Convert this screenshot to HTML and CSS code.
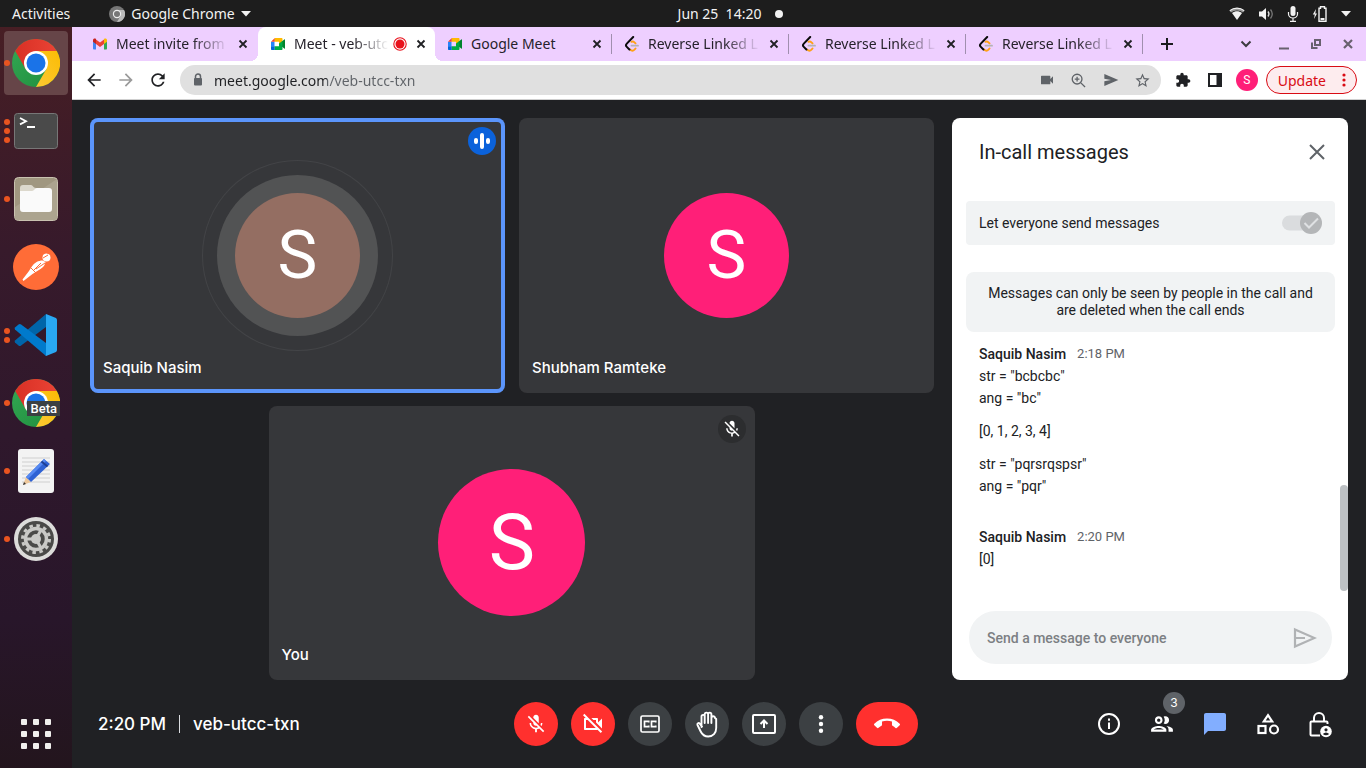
FILE: index.html
```html
<!DOCTYPE html>
<html lang="en">
<head>
<meta charset="utf-8">
<meta name="viewport" content="width=device-width, initial-scale=1">
<title>Meet - veb-utcc-txn</title>
<link rel="stylesheet" href="styles.css">
</head>
<body>
<svg class="defs" aria-hidden="true">
  <defs>
    <linearGradient id="g-red" x1="0" y1="0" x2="1" y2="0"><stop offset="0" stop-color="#d93025"/><stop offset="1" stop-color="#ea4335"/></linearGradient>
    <linearGradient id="g-green" x1="0" y1="0" x2="1" y2="1"><stop offset="0" stop-color="#34a853"/><stop offset="1" stop-color="#1e8e3e"/></linearGradient>
    <linearGradient id="g-yellow" x1="0" y1="1" x2="1" y2="0"><stop offset="0" stop-color="#fcc934"/><stop offset="1" stop-color="#fbbc04"/></linearGradient>
    <symbol id="chrome" viewBox="0 0 48 48">
      <circle cx="24" cy="24" r="24" fill="url(#g-green)"/>
      <path d="M24 12H44.8A24 24 0 0 1 24 48L34.4 30Z" fill="url(#g-yellow)"/>
      <path d="M3.2 12A24 24 0 0 1 44.8 12H24L13.6 30Z" fill="url(#g-red)"/>
      <circle cx="24" cy="24" r="12" fill="#fff"/>
      <circle cx="24" cy="24" r="9.5" fill="#1a73e8"/>
    </symbol>
    <symbol id="meet" viewBox="0 0 16 16">
      <path d="M1 5.8h3.5v4.6H1z" fill="#2684fc"/>
      <path d="M4.8 2v3.8H1z" fill="#ea4335"/>
      <path d="M4.8 2h6.7c.6 0 1 .4 1 1v3L9 8.400V5.800H4.800z" fill="#ffba00"/>
      <path d="M1 10.200h3.800V14H2c-.6 0-1-.4-1-1z" fill="#0066da"/>
      <path d="M4.800 10.200H9V8l3.500-2.500v7.500c0 .6-.4 1-1 1H4.800z" fill="#00ac47"/>
      <path d="M9 8l5.200-4.600c.4-.3.800-.1.800.4v8.400c0 .5-.4.700-.8.400z" fill="#00832d"/>
      <path d="M12.500 5v6L9 8z" fill="#00ac47"/>
    </symbol>
    <symbol id="leet" viewBox="0 0 16 16">
      <path d="M6 13.500q2.500 2.200 4.500.2l1-1.200M7.500 5.800q1.500-.8 3 .6l1 1" fill="none" stroke="#ffa116" stroke-width="1.900" stroke-linecap="round"/>
      <path d="M9.200 1L2.800 7.600c-1 1-1 2.300 0 3.300l2.600 2.600" fill="none" stroke="#0b0b0b" stroke-width="2" stroke-linecap="round"/>
      <path d="M7.500 9.700h6.500" stroke="#b3b3b3" stroke-width="1.800" stroke-linecap="round"/>
    </symbol>
    <symbol id="x" viewBox="0 0 12 12"><path d="M2.500 2.500l7 7m0-7l-7 7" stroke="currentColor" stroke-width="1.800" fill="none"/></symbol>
    <symbol id="mic-off" viewBox="0 0 24 24"><path fill="currentColor" d="M19 11h-1.700c0 .74-.16 1.430-.43 2.050l1.230 1.230c.56-.98.9-2.090.9-3.280zm-4.020.17c0-.06.02-.11.02-.17V5c0-1.660-1.340-3-3-3S9 3.340 9 5v.18l5.980 5.990zM4.270 3L3 4.270l6.010 6.010V11c0 1.660 1.330 3 2.990 3 .22 0 .44-.03.65-.08l1.660 1.660c-.71.33-1.500.52-2.310.52-2.760 0-5.300-2.100-5.300-5.100H5c0 3.410 2.720 6.230 6 6.720V21h2v-3.280c.91-.13 1.770-.45 2.540-.9L19.730 21 21 19.730 4.270 3z"/></symbol>
  </defs>
</svg>

<div class="desktop">
  <header class="topbar">
    <div class="topbar-left">
      <button class="plain">Activities</button>
      <button class="plain app-menu">
        <svg width="16" height="16" viewBox="0 0 16 16"><circle cx="8" cy="8" r="8" fill="#777"/><path d="M8 4h7A8 8 0 0 1 8 16l3.500-6z" fill="#bbb"/><circle cx="8" cy="8" r="4.200" fill="#eee"/><circle cx="8" cy="8" r="3" fill="#777"/></svg>
        Google Chrome
        <svg width="10" height="6" viewBox="0 0 10 6"><path d="M0 0h10L5 5.500z" fill="#f2f2f2"/></svg>
      </button>
    </div>
    <div class="clock"><time>Jun 25&nbsp; 14:20</time><span class="dot"></span></div>
    <div class="status">
      <svg width="16" height="16" viewBox="0 0 16 16"><path d="M.5 4.800C5 1 11 1 15.500 4.800L14 6.500C10.500 3.800 5.500 3.800 2 6.500z" fill="#999"/><path d="M3 7c3.200-2.200 6.800-2.200 10 0L8 14z" fill="#f2f2f2"/><path d="M.8 4.600C5 1.200 11 1.200 15.200 4.600" stroke="#f2f2f2" stroke-width="1.200" fill="none"/></svg>
      <svg width="16" height="16" viewBox="0 0 16 16"><path d="M1 5.500h3L8 2v12l-4-3.500H1z" fill="#f2f2f2"/><path d="M10 5.500q2 2.500 0 5" fill="none" stroke="#ddd" stroke-width="1.300"/><path d="M12.500 3.500q3.500 4.500 0 9" fill="none" stroke="#777" stroke-width="1.300"/></svg>
      <svg width="12" height="16" viewBox="0 0 12 16"><rect x="3.500" y="0" width="5" height="10" rx="2.500" fill="#f2f2f2"/><path d="M1.500 6v2a4.500 4 0 0 0 9 0V6M6 12v3M3 15.400h6" fill="none" stroke="#f2f2f2" stroke-width="1.200"/></svg>
      <svg width="16" height="16" viewBox="0 0 16 16"><path d="M4 3L.8 8.500h2L2 13l3-5.500H3.300z" fill="#f2f2f2"/><path d="M7 2.200h1.500V.8h4v1.400H14v13H7z" fill="none" stroke="#f2f2f2" stroke-width="1.400"/><path d="M8.500 12h4v2h-4z" fill="#f2f2f2"/></svg>
      <svg width="10" height="6" viewBox="0 0 10 6"><path d="M0 0h10L5 5.500z" fill="#f2f2f2"/></svg>
    </div>
  </header>

  <nav class="dock" aria-label="Dock">
    <button class="app active" aria-label="Google Chrome"><span class="dots"><i></i></span><svg width="48" height="48"><use href="#chrome"/></svg></button>
    <button class="app" aria-label="Terminal"><span class="dots"><i></i><i></i><i></i></span>
      <svg width="48" height="48" viewBox="0 0 48 48"><rect x="2.500" y="6.500" width="43" height="35" rx="3" fill="#4a4a4a" stroke="#777"/><path d="M8 11l6 3.200-6 3.200M15 20h8" fill="none" stroke="#fff" stroke-width="1.800"/></svg></button>
    <button class="app" aria-label="Files"><span class="dots"><i></i></span>
      <svg width="48" height="48" viewBox="0 0 48 48"><rect x="2.500" y="2.500" width="43" height="43" rx="4" fill="#a09780" stroke="#c9c2b0"/><path d="M3 32L45 4v38q0 3-3 3H6q-3 0-3-3z" fill="#aca48f"/><path d="M8 13c0-2 1-3 3-3h8c2 0 2 3 5 3h13v6H8z" fill="#dcd8cc"/><path d="M8 16h12c2 0 3-3 5-3h12c2 0 3 1 3 3v18c0 2-1 3-3 3H11c-2 0-3-1-3-3z" fill="#fafafa"/></svg></button>
    <button class="app" aria-label="Postman">
      <svg width="48" height="48" viewBox="0 0 48 48"><circle cx="24" cy="24" r="23" fill="#ff6c37"/><circle cx="34.500" cy="14.500" r="4" fill="#fff"/><path d="M30.500 17.500c-4 0-8 2-11 6.500L17 28l-6.500 8.500 1 1.500 9-7 8-5c3-2 4.500-4 5-7z" fill="#fff"/><path d="M31 15l5-3M29 20l-8 8M19 25l5 5M33 20l-9 6" stroke="#ff6c37" stroke-width="1"/></svg></button>
    <button class="app" aria-label="Visual Studio Code"><span class="dots"><i></i><i></i></span>
      <svg width="48" height="48" viewBox="0 0 48 48"><path d="M3 29.500q-.8 1 0 2l3.500 3q1.200 1 2.600 0L36 14.500 34 3z" fill="#0065a9"/><path d="M3 18.500q-.8-1 0-2l3.500-3q1.200-1 2.600 0L36 33.500 34 45z" fill="#007acc"/><path d="M34 3l10 4q1 1 1 2v30q0 1-1 2l-10 4q-.5 0 0-2z" fill="#29a8f3"/></svg></button>
    <button class="app" aria-label="Google Chrome Beta"><span class="dots"><i></i></span><svg width="48" height="48"><use href="#chrome"/></svg><span class="beta">Beta</span></button>
    <button class="app" aria-label="Text Editor"><span class="dots"><i></i></span>
      <svg width="48" height="48" viewBox="0 0 48 48"><rect x="6" y="2" width="36" height="44" rx="3" fill="#f3f3f3"/><path d="M10 11h28M10 15h28M10 19h28M10 23h28M10 27h28M10 31h28M10 35h28" stroke="#cfcfcf"/><path d="M11 38l3-8 5 5z" fill="#edc79b"/><path d="M11 38l1-3 2 2z" fill="#333"/><path d="M14 30l18-18 6 5-19 18z" fill="#2f62d4"/><path d="M14 30l18-18 2 2-18 18z" fill="#5689f2"/><path d="M29.500 14.500l6 5" stroke="#1d3f94" stroke-width="2"/></svg></button>
    <button class="app" aria-label="Settings"><span class="dots"><i></i></span>
      <svg width="48" height="48" viewBox="0 0 48 48"><circle cx="24" cy="24" r="22" fill="#dcdcda"/><circle cx="24" cy="24" r="18" fill="#4a4a48"/><circle cx="24" cy="24" r="13.500" fill="none" stroke="#c9c9c6" stroke-width="3" stroke-dasharray="3.500 3.570"/><circle cx="24" cy="24" r="10.500" fill="none" stroke="#c9c9c6" stroke-width="3.500"/><path d="M24 24l-10 0M24 24l5-9M24 24l5 9" stroke="#c9c9c6" stroke-width="3"/><circle cx="24" cy="24" r="5" fill="#c9c9c6"/></svg></button>
    <button class="app launcher" aria-label="Show Applications">
      <svg width="30" height="30" viewBox="0 0 30 30" fill="#f0efed"><rect width="6" height="6" rx="1"/><rect x="12" width="6" height="6" rx="1"/><rect x="24" width="6" height="6" rx="1"/><rect y="12" width="6" height="6" rx="1"/><rect x="12" y="12" width="6" height="6" rx="1"/><rect x="24" y="12" width="6" height="6" rx="1"/><rect y="24" width="6" height="6" rx="1"/><rect x="12" y="24" width="6" height="6" rx="1"/><rect x="24" y="24" width="6" height="6" rx="1"/></svg></button>
  </nav>

  <div class="browser">
    <div class="tabstrip">
      <div class="tab before-active"><svg class="fav" viewBox="0 0 16 16"><path d="M1 4v8.500c0 .5.500 1 1 1h2V6.500z" fill="#4285f4"/><path d="M15 4v8.500c0 .5-.5 1-1 1h-2V6.500z" fill="#34a853"/><path d="M4 3.500l4 3 4-3V8l-4 3-4-3z" fill="#ea4335"/><path d="M1 4.200C1 2.600 2.800 2 4 3l0 5-3-2.200z" fill="#c5221f"/><path d="M15 4.200C15 2.600 13.200 2 12 3v5l3-2.200z" fill="#fbbc04"/></svg><a class="tab-title" href="#">Meet invite from</a><button class="tab-x" aria-label="Close tab"><svg><use href="#x"/></svg></button></div>
      <div class="tab active"><svg class="fav"><use href="#meet"/></svg><a class="tab-title" href="#">Meet - veb-utc</a><svg class="rec" width="14" height="14" viewBox="0 0 14 14"><circle cx="7" cy="7" r="6.200" fill="none" stroke="#e8111b" stroke-width="1.100"/><circle cx="7" cy="7" r="4.500" fill="#e8111b"/></svg><button class="tab-x" aria-label="Close tab"><svg><use href="#x"/></svg></button></div>
      <div class="tab after-active"><svg class="fav"><use href="#meet"/></svg><a class="tab-title short" href="#">Google Meet</a><button class="tab-x" aria-label="Close tab"><svg><use href="#x"/></svg></button></div>
      <div class="tab"><svg class="fav"><use href="#leet"/></svg><a class="tab-title" href="#">Reverse Linked L</a><button class="tab-x" aria-label="Close tab"><svg><use href="#x"/></svg></button></div>
      <div class="tab"><svg class="fav"><use href="#leet"/></svg><a class="tab-title" href="#">Reverse Linked L</a><button class="tab-x" aria-label="Close tab"><svg><use href="#x"/></svg></button></div>
      <div class="tab"><svg class="fav"><use href="#leet"/></svg><a class="tab-title" href="#">Reverse Linked L</a><button class="tab-x" aria-label="Close tab"><svg><use href="#x"/></svg></button></div>
      <button class="new-tab" aria-label="New tab"><svg width="14" height="14" viewBox="0 0 14 14"><path d="M7 1v12M1 7h12" stroke="#1b1b1f" stroke-width="2"/></svg></button>
      <div class="window-controls">
        <button class="wc search" aria-label="Search tabs"><svg width="12" height="12" viewBox="0 0 12 12"><path d="M1.500 3.500L6 8l4.500-4.500" fill="none" stroke="#3c3c40" stroke-width="2"/></svg></button>
        <button class="wc" aria-label="Minimize"><svg width="12" height="12" viewBox="0 0 12 12"><path d="M1 10.500h10" stroke="#68606e" stroke-width="2"/></svg></button>
        <button class="wc" aria-label="Restore"><svg width="12" height="12" viewBox="0 0 12 12"><path d="M5 2h5v5H5zM2 4.500V10h5.500" fill="none" stroke="#68606e" stroke-width="2"/></svg></button>
        <button class="wc" aria-label="Close"><svg width="12" height="12" viewBox="0 0 12 12"><path d="M2 2l8 8m0-8l-8 8" fill="none" stroke="#68606e" stroke-width="2.200"/></svg></button>
      </div>
    </div>

    <div class="toolbar">
      <button class="tool" aria-label="Back"><svg width="20" height="20" viewBox="0 0 24 24"><path fill="#202124" d="M20 11H7.830l5.590-5.590L12 4l-8 8 8 8 1.410-1.410L7.830 13H20v-2z"/></svg></button>
      <button class="tool" aria-label="Forward"><svg width="20" height="20" viewBox="0 0 24 24"><path fill="#9a9a9a" d="M4 11h12.170l-5.590-5.590L12 4l8 8-8 8-1.410-1.410L16.170 13H4v-2z"/></svg></button>
      <button class="tool" aria-label="Reload"><svg width="20" height="20" viewBox="0 0 24 24"><path fill="#202124" d="M17.650 6.350C16.200 4.900 14.210 4 12 4c-4.420 0-7.990 3.580-7.990 8s3.570 8 7.990 8c3.730 0 6.840-2.550 7.730-6h-2.080c-.82 2.330-3.040 4-5.650 4-3.310 0-6-2.690-6-6s2.690-6 6-6c1.660 0 3.140.69 4.220 1.780L13 11h7V4l-2.350 2.350z"/></svg></button>
      <div class="omnibox">
        <svg width="10" height="14" viewBox="0 0 10 14"><path d="M2.500 6V3.500a2.500 2.500 0 0 1 5 0V6" fill="none" stroke="#5f6368" stroke-width="1.500"/><rect x="1" y="5" width="8" height="7.500" rx="1" fill="#5f6368"/></svg>
        <input class="url" type="text" aria-label="Address" value="meet.google.com/veb-utcc-txn">
        <button class="tool" aria-label="Camera in use"><svg width="16" height="16" viewBox="0 0 24 24"><path fill="#5f6368" d="M17 10.500V6.500c0-.55-.45-1-1-1H4c-.55 0-1 .45-1 1v11c0 .55.450 1 1 1h12c.55 0 1-.45 1-1v-4l4 4v-11l-4 4z"/></svg></button>
        <button class="tool" aria-label="Zoom"><svg width="15" height="15" viewBox="0 0 16 16"><path d="M10.500 10.500L15 15M6.500 4v5M4 6.500h5" stroke="#5f6368" stroke-width="1.400"/><circle cx="6.500" cy="6.500" r="5.200" fill="none" stroke="#5f6368" stroke-width="1.400"/></svg></button>
        <button class="tool" aria-label="Share"><svg width="16" height="16" viewBox="0 0 24 24"><path fill="#5f6368" d="M2 21L23 12 2 3v7l10 2-10 2z"/></svg></button>
        <button class="tool" aria-label="Bookmark"><svg width="17" height="17" viewBox="0 0 24 24"><path fill="#5f6368" d="M22 9.240l-7.190-.62L12 2 9.190 8.630 2 9.240l5.460 4.730L5.820 21 12 17.270 18.180 21l-1.630-7.030L22 9.240zM12 15.400l-3.760 2.270 1-4.280-3.320-2.880 4.380-.38L12 6.100l1.710 4.040 4.380.38-3.320 2.880 1 4.280L12 15.400z"/></svg></button>
      </div>
      <button class="tool" aria-label="Extensions"><svg width="16" height="16" viewBox="0 0 24 24"><path fill="#202124" d="M20.500 11H19V7c0-1.100-.9-2-2-2h-4V3.500C13 2.120 11.880 1 10.500 1S8 2.120 8 3.500V5H4c-1.100 0-1.990.9-1.990 2v3.800H3.500c1.490 0 2.700 1.210 2.700 2.700s-1.210 2.700-2.700 2.700H2V20c0 1.100.9 2 2 2h3.800v-1.500c0-1.490 1.210-2.700 2.700-2.700 1.490 0 2.700 1.210 2.700 2.700V22H17c1.100 0 2-.9 2-2v-4h1.500c1.380 0 2.500-1.120 2.500-2.500S21.880 11 20.500 11z"/></svg></button>
      <button class="tool" aria-label="Side panel"><svg width="14" height="14" viewBox="0 0 14 14"><path fill="#202124" fill-rule="evenodd" d="M0 0h14v14H0zM2 2v10h6.500V2z"/></svg></button>
      <button class="tool" aria-label="Profile"><span class="profile">S</span></button>
      <button class="update">Update<svg width="4" height="14" viewBox="0 0 4 14" fill="#d90b14"><circle cx="2" cy="2" r="1.600"/><circle cx="2" cy="7" r="1.600"/><circle cx="2" cy="12" r="1.600"/></svg></button>
    </div>

    <main class="meet">
      <section class="stage">
        <div class="tiles">
          <article class="tile speaking">
            <div class="avatar brown">S</div>
            <h2 class="name">Saquib Nasim</h2>
            <span class="badge audio"><svg width="18" height="18" viewBox="0 0 18 18" stroke="#fff" stroke-width="4" stroke-linecap="round"><path d="M3 8v2M9 3v12M15 8v2"/></svg></span>
          </article>
          <article class="tile">
            <div class="avatar">S</div>
            <h2 class="name">Shubham Ramteke</h2>
          </article>
          <article class="tile self">
            <div class="avatar large">S</div>
            <h2 class="name">You</h2>
            <span class="badge muted"><svg width="20" height="20"><use href="#mic-off"/></svg></span>
          </article>
        </div>

        <aside class="chat">
          <div class="chat-head">
            <h1>In-call messages</h1>
            <button class="plain" aria-label="Close"><svg width="18" height="18" viewBox="0 0 18 18"><path d="M2 2l14 14M16 2L2 16" stroke="#5f6368" stroke-width="2"/></svg></button>
          </div>
          <label class="allow">Let everyone send messages
            <input type="checkbox" class="switch" checked disabled>
            <svg width="40" height="22" viewBox="0 0 40 22"><rect x="0" y="3.500" width="38" height="15" rx="7.500" fill="#dadcde"/><circle cx="29" cy="11" r="11" fill="#b4b6b8"/><path d="M22.500 11l4.500 4.500 9-9" fill="none" stroke="#dfe1e3" stroke-width="2"/></svg>
          </label>
          <p class="notice">Messages can only be seen by people in the call and are deleted when the call ends</p>
          <div class="messages">
            <div class="msg">
              <div class="msg-head"><b>Saquib Nasim</b><time>2:18 PM</time></div>
              <p>str = "bcbcbc"<br>ang = "bc"</p>
              <p>[0, 1, 2, 3, 4]</p>
              <p>str = "pqrsrqspsr"<br>ang = "pqr"</p>
            </div>
            <div class="msg">
              <div class="msg-head"><b>Saquib Nasim</b><time>2:20 PM</time></div>
              <p>[0]</p>
            </div>
          </div>
          <form class="compose">
            <input type="text" placeholder="Send a message to everyone" aria-label="Send a message to everyone">
            <button class="plain" type="button" aria-label="Send"><svg width="24" height="22" viewBox="0 0 24 22"><path d="M2 2.500L21.500 11 2 19.500zM2 11h10" fill="none" stroke="#b0b2b4" stroke-width="2.200"/></svg></button>
          </form>
          <span class="thumb"></span>
        </aside>
      </section>

      <footer class="callbar">
        <div class="info"><span>2:20 PM</span><span class="rule"></span><span>veb-utcc-txn</span></div>
        <div class="controls">
          <button class="ctl red" aria-label="Turn on microphone"><svg width="22" height="22"><use href="#mic-off"/></svg></button>
          <button class="ctl red" aria-label="Turn on camera"><svg width="24" height="24" viewBox="0 0 24 24"><path fill="#fff" d="M9.560 8l-2-2-4.150-4.140L2 3.270 4.730 6H4c-.55 0-1 .45-1 1v10c0 .55.450 1 1 1h12c.21 0 .39-.08.55-.18L19.730 21l1.410-1.410-8.860-8.860L9.560 8zM5 16V8h1.730l8 8H5zm10-8v2.610l6 6V6.500l-4 4V7c0-.55-.45-1-1-1h-5.610l2 2H15z"/></svg></button>
          <button class="ctl" aria-label="Turn on captions"><svg width="20" height="18" viewBox="0 0 20 18" fill="none" stroke="#fff" stroke-width="1.700"><rect x="1" y="1" width="18" height="16" rx="1.500"/><path d="M8.700 7.500V6.400H4.500v5.200h4.200v-1.100M15.700 7.500V6.400h-4.200v5.200h4.200v-1.100"/></svg></button>
          <button class="ctl" aria-label="Raise hand"><svg width="24" height="28" viewBox="0 0 24 28" fill="none" stroke="#fff" stroke-width="1.900" stroke-linecap="round" stroke-linejoin="round"><path d="M6.500 17V6.500a1.600 1.600 0 0 1 3.200 0V13 4.300a1.600 1.600 0 0 1 3.400 0V13 4.300a1.600 1.600 0 0 1 3.300 0V13 8a1.700 1.700 0 0 1 3.600 0l1.200 1V18c0 5-3.200 8.500-8 8.500-4 0-6-2-7.500-5L2.500 15c-.7-1.600 1.200-2.600 2.200-1.400l2.300 3"/></svg></button>
          <button class="ctl" aria-label="Present now"><svg width="24" height="20" viewBox="0 0 24 20" fill="none" stroke="#fff"><rect x="1" y="1" width="22" height="18" rx="1" stroke-width="2"/><path d="M12 14V7M8.500 10L12 6.500l3.500 3.500" stroke-width="2"/></svg></button>
          <button class="ctl" aria-label="More options"><svg width="6" height="18" viewBox="0 0 6 18" fill="#fff"><circle cx="3" cy="2.200" r="2.200"/><circle cx="3" cy="9" r="2.200"/><circle cx="3" cy="15.800" r="2.200"/></svg></button>
          <button class="ctl red leave" aria-label="Leave call"><svg width="26" height="26" viewBox="0 0 24 24"><path fill="#fff" d="M12 9c-1.600 0-3.150.25-4.600.72v3.100c0 .39-.23.74-.56.9-.98.49-1.870 1.120-2.660 1.850-.18.18-.43.28-.7.28-.28 0-.53-.11-.71-.29L.29 13.080c-.18-.17-.29-.42-.29-.7 0-.28.110-.53.290-.71C3.340 8.780 7.460 7 12 7s8.660 1.780 11.710 4.670c.18.18.290.43.290.71 0 .28-.11.53-.29.71l-2.480 2.480c-.18.18-.43.29-.71.29-.27 0-.52-.11-.7-.28-.79-.74-1.690-1.360-2.670-1.850-.33-.16-.56-.5-.56-.9v-3.100C15.150 9.250 13.600 9 12 9z"/></svg></button>
        </div>
        <div class="panels">
          <button class="panel" aria-label="Meeting details"><svg width="24" height="24" viewBox="0 0 24 24"><circle cx="12" cy="12" r="10" fill="none" stroke="#fff" stroke-width="2"/><path d="M12 10.500V17M12 6.500v2.200" stroke="#fff" stroke-width="2"/></svg></button>
          <button class="panel" aria-label="Show everyone"><svg width="24" height="24" viewBox="0 3 22 18"><path fill="#fff" d="M8 13.750c-2.340 0-7 1.170-7 3.500V19h14v-1.750c0-2.330-4.660-3.500-7-3.500zM3.340 17c.84-.58 2.870-1.250 4.660-1.250s3.820.67 4.660 1.250H3.340zM8 12c1.930 0 3.500-1.570 3.500-3.500S9.930 5 8 5 4.500 6.570 4.500 8.500 6.070 12 8 12zm0-5c.83 0 1.500.67 1.500 1.500S8.830 10 8 10s-1.500-.67-1.500-1.500S7.170 7 8 7zm7.040 6.810c1.160.84 1.960 1.960 1.960 3.440V19h4v-1.750c0-2.020-3.500-3.170-5.960-3.440zM14 12c1.930 0 3.500-1.570 3.500-3.500S15.930 5 14 5c-.54 0-1.040.13-1.500.35.63.89 1 1.980 1 3.150s-.37 2.260-1 3.150c.46.22.96.35 1.500.35z"/></svg><span class="count">3</span></button>
          <button class="panel" aria-label="Chat with everyone"><svg width="24" height="24" viewBox="0 0 24 24"><path d="M1 3c0-1.200.8-2 2-2h18c1.200 0 2 .8 2 2v14c0 1.200-.8 2-2 2H5l-4 4z" fill="#82aeff"/></svg></button>
          <button class="panel" aria-label="Activities"><svg width="24" height="24" viewBox="0 0 24 24" fill="none" stroke="#fff" stroke-width="2.200"><path d="M12 3.200L16.200 9.500H7.800z"/><rect x="2.500" y="14" width="7" height="7"/><circle cx="18" cy="17.500" r="4"/></svg></button>
          <button class="panel" aria-label="Host controls"><svg width="24" height="26" viewBox="2 0 24 26"><path d="M13 23.500H4.500a1 1 0 0 1-1-1v-12a1 1 0 0 1 1-1h15a1 1 0 0 1 1 1V12M7 9.500V6a5 5 0 0 1 10 0v3.500" fill="none" stroke="#fff" stroke-width="2"/><circle cx="19" cy="19.500" r="5.800" fill="#fff"/><circle cx="19" cy="17.800" r="1.600" fill="#202124"/><path d="M15.800 22q3.200-3 6.400 0-3.200 2.500-6.400 0z" fill="#202124"/></svg></button>
        </div>
      </footer>
    </main>
  </div>
</div>
</body>
</html>
```
FILE: styles.css
```css
* { box-sizing: border-box; }

body {
  margin: 0;
  font-family: "Noto Sans", sans-serif;
  font-size: 14px;
  color: #202124;
}

button {
  margin: 0;
  padding: 0;
  border: 0;
  background: none;
  color: inherit;
  font: inherit;
}

h1, h2, p { margin: 0; }
svg { flex: none; display: block; }
.defs { position: absolute; width: 0; height: 0; }

.desktop {
  display: grid;
  grid-template: 27px minmax(0, 1fr) / 72px minmax(0, 1fr);
  min-height: 100vh;
}

/* System bar */
.topbar {
  grid-column: 1 / -1;
  display: grid;
  grid-template-columns: 1fr auto 1fr;
  align-items: center;
  padding: 0 15px 0 12px;
  background: #1d1d1d;
  color: #f2f2f2;
}
.topbar-left, .app-menu, .clock, .status { display: flex; align-items: center; }
.topbar-left { gap: 39px; }
.app-menu { gap: 6px; }
.clock { gap: 14px; padding-left: 98px; }
.dot { width: 8px; height: 8px; border-radius: 50%; background: #f2f2f2; }
.status { justify-content: flex-end; gap: 13px; }

/* Dock */
.dock {
  display: flex;
  flex-direction: column;
  gap: 4px;
  padding: 4px 4px 2px;
  background: linear-gradient(#471e24, #371a2b 30%, #2f182c 55%, #28162a 80%, #23151d);
}
.app {
  position: relative;
  display: flex;
  align-items: center;
  justify-content: center;
  height: 64px;
  border-radius: 4px;
}
.app.active { background: #664548; }
.launcher { margin-top: auto; }
.dots {
  position: absolute;
  left: 0;
  top: 0;
  bottom: 0;
  display: flex;
  flex-direction: column;
  justify-content: center;
  gap: 3px;
}
.dots i { width: 6px; height: 6px; border-radius: 50%; background: #e95420; }
.beta {
  position: absolute;
  right: 8px;
  bottom: 19px;
  padding: 0 3px;
  background: #3c4043;
  color: #fff;
  font: 500 13px/15px Roboto, sans-serif;
}

/* Browser chrome */
.browser { display: flex; flex-direction: column; min-width: 0; }
.tabstrip {
  display: flex;
  align-items: center;
  height: 34px;
  padding: 0 2px 0 9px;
  background: #eecfff;
}
.tab {
  display: flex;
  align-items: center;
  flex: 0 1 177px;
  min-width: 0;
  height: 20px;
  padding: 0 6px 0 12px;
  border-right: 1px solid #a08fae;
}
.tab.before-active { border-color: transparent; padding-left: 11px; }
.tab.active {
  position: relative;
  height: 34px;
  border: 0;
  border-radius: 8px 8px 0 0;
  background: #fff;
}
.tab.active::before, .tab.active::after {
  content: "";
  position: absolute;
  bottom: 0;
  width: 8px;
  height: 8px;
}
.tab.active::before { right: 100%; background: radial-gradient(circle at 0 0, transparent 8px, #fff 8px); }
.tab.active::after { left: 100%; background: radial-gradient(circle at 100% 0, transparent 8px, #fff 8px); }
.fav { width: 16px; height: 16px; margin-right: 8px; }
.tab-title {
  flex: 1;
  overflow: hidden;
  white-space: nowrap;
  line-height: 20px;
  color: #26222b;
  text-decoration: none;
  -webkit-mask-image: linear-gradient(to left, transparent, #000 36px);
  mask-image: linear-gradient(to left, transparent, #000 36px);
}
.tab-title.short { -webkit-mask-image: none; mask-image: none; }
.rec { margin: 0 0 0 4px; }
.tab-x { display: grid; place-items: center; width: 16px; height: 16px; margin-left: 6px; }
.tab-x svg { width: 12px; height: 12px; }
.new-tab { display: grid; place-items: center; width: 32px; height: 28px; margin: 0 8px; }
.window-controls { display: flex; margin-left: auto; }
.wc { display: grid; place-items: center; width: 32px; height: 28px; }
.wc.search { margin-right: 6px; }

.toolbar {
  display: flex;
  align-items: center;
  height: 39px;
  padding: 0 9px 0 6px;
  border-bottom: 1px solid #cfcfcf;
  background: #fff;
}
.tool { display: grid; place-items: center; flex: none; width: 32px; height: 28px; }
.omnibox {
  display: flex;
  align-items: center;
  flex: 1;
  min-width: 0;
  height: 30px;
  margin: 0 6px;
  padding: 0 2px 0 13px;
  border-radius: 15px;
  background: #e0e0e0;
}
.url {
  flex: 1;
  min-width: 0;
  margin-left: 11px;
  padding: 0;
  border: 0;
  outline: 0;
  font: inherit;
  color: transparent;
  background: linear-gradient(to right, #202124 113px, #5f6368 113px);
  -webkit-background-clip: text;
  background-clip: text;
}
.profile {
  width: 22px;
  border-radius: 50%;
  background: #ff1f78;
  color: #fff;
  font: 12px/22px Roboto, sans-serif;
}
.update {
  display: flex;
  align-items: center;
  gap: 16px;
  height: 28px;
  margin-left: 3px;
  padding: 0 10px 0 11px;
  border: 1px solid #d90b14;
  border-radius: 14px;
  background: #fdecee;
  color: #d90b14;
}

/* Meeting */
.meet {
  display: flex;
  flex-direction: column;
  flex: 1;
  padding-top: 18px;
  background: #202124;
  color: #fff;
}
.stage {
  display: grid;
  grid-template-columns: minmax(0, 1fr) 396px;
  gap: 18px;
  flex: 1;
  padding: 0 18px;
}
.tiles {
  display: grid;
  grid-template-columns: 1fr 1fr;
  grid-template-rows: 1fr 1fr;
  gap: 13px 14px;
}
.tile {
  position: relative;
  display: grid;
  place-items: center;
  border-radius: 8px;
  background: #36373a;
}
.tile.self { grid-column: 1 / -1; justify-self: center; width: 57.7%; }
.tile.speaking { box-shadow: inset 0 0 0 4px #5b95fb; }
.avatar {
  width: 125px;
  border-radius: 50%;
  background: #ff1f78;
  text-align: center;
  font: 67px/125px Roboto, sans-serif;
}
.avatar.large { width: 147px; font-size: 78px; line-height: 147px; }
.avatar.brown {
  background: #946e62;
  box-shadow: 0 0 0 18px #525354, 0 0 0 32px #36373a, 0 0 0 33px #434447;
}
.name {
  position: absolute;
  left: 13px;
  bottom: 15px;
  font: 500 15px/20px Inter, sans-serif;
}
.badge {
  position: absolute;
  top: 9px;
  right: 9px;
  display: grid;
  place-items: center;
  width: 28px;
  height: 28px;
  border-radius: 50%;
}
.badge.audio { background: #0b62db; }
.badge.muted { background: #2c2d2f; }

/* Chat panel */
.chat {
  position: relative;
  display: flex;
  flex-direction: column;
  padding: 0 13px 16px 14px;
  border-radius: 8px;
  background: #fff;
  color: #202124;
  font-family: Roboto, sans-serif;
}
.chat-head {
  display: flex;
  align-items: center;
  justify-content: space-between;
  height: 68px;
  padding: 0 9px 0 13px;
}
.chat-head h1 { font: 400 20px/28px Roboto, sans-serif; }
.allow {
  display: flex;
  align-items: center;
  justify-content: space-between;
  height: 44px;
  margin-top: 15px;
  padding: 0 13px;
  border-radius: 4px;
  background: #f1f3f4;
}
.switch { position: absolute; opacity: 0; }
.notice {
  margin-top: 27px;
  padding: 13px;
  border-radius: 8px;
  background: #f1f3f4;
  text-align: center;
  line-height: 17px;
}
.messages { flex: 1; padding: 11px 13px; line-height: 22px; }
.msg + .msg { margin-top: 29px; }
.msg-head { display: flex; gap: 11px; }
.msg-head b { font-weight: 500; }
.msg-head time { color: #5f6368; font-size: 13px; }
.msg p + p { margin-top: 11px; }
.compose {
  display: flex;
  align-items: center;
  height: 53px;
  margin: 0 3px;
  padding: 0 15px 0 18px;
  border-radius: 27px;
  background: #f1f3f4;
}
.compose input {
  flex: 1;
  min-width: 0;
  padding: 0;
  border: 0;
  outline: 0;
  background: none;
  font: 500 14px/20px Roboto, sans-serif;
}
.compose input::placeholder { color: #7c7f83; }
.thumb {
  position: absolute;
  right: 0;
  bottom: 89px;
  width: 8px;
  height: 106px;
  border-radius: 4px;
  background: #bdc1c4;
}

/* Call controls */
.callbar {
  display: grid;
  grid-template-columns: 1fr auto 1fr;
  align-items: center;
  height: 88px;
  padding: 0 33px 0 26px;
}
.info { display: flex; align-items: center; gap: 13px; font: 500 17px/20px Inter, sans-serif; }
.rule { width: 1px; height: 18px; background: #dadce0; }
.controls { display: flex; gap: 13px; }
.ctl {
  display: grid;
  place-items: center;
  width: 44px;
  height: 44px;
  border-radius: 22px;
  background: #3c4043;
}
.ctl.red { background: #ff302e; }
.ctl.leave { width: 62px; }
.panels { display: flex; justify-content: flex-end; gap: 29px; }
.panel { position: relative; display: grid; place-items: center; width: 24px; height: 24px; }
.count {
  position: absolute;
  left: 13px;
  bottom: 22px;
  width: 22px;
  border-radius: 50%;
  background: #5f6368;
  font: 12px/22px Inter, sans-serif;
}
```
